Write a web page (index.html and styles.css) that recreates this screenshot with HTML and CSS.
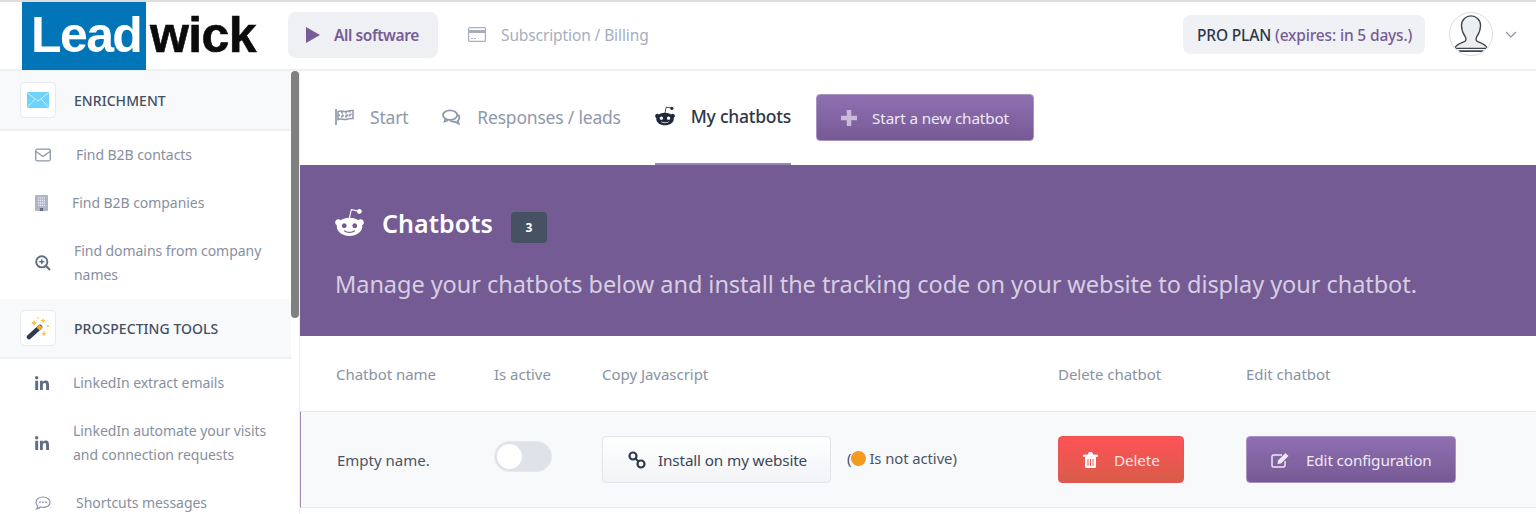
FILE: index.html
```html
<!DOCTYPE html>
<html lang="en">
<head>
<meta charset="utf-8">
<title>Chatbots</title>
<link rel="stylesheet" href="styles.css">
</head>
<body>
<svg class="defs" width="0" height="0" aria-hidden="true">
  <symbol id="alien" viewBox="16 16 480 480"><path d="M440.3 203.5c-15 0-28.2 6.2-37.9 15.9-35.7-24.7-83.8-40.6-137.1-42.3L293 52.3l88.2 19.8c0 21.6 17.6 39.2 39.2 39.2 22 0 39.7-18.1 39.7-39.7s-17.6-39.7-39.7-39.7c-15.4 0-28.7 9.3-35.3 22l-97.4-21.6c-4.9-1.3-9.7 2.2-11 7.1L246.3 177c-52.9 2.2-100.5 18.1-136.3 42.8-9.7-10.1-23.4-16.3-38.4-16.3-55.6 0-73.8 74.6-22.9 100.1-1.8 7.9-2.6 16.3-2.6 24.7 0 83.8 94.4 151.7 210.3 151.7 116.4 0 210.8-67.9 210.8-151.7 0-8.4-.9-17.2-3.1-25.1 49.9-25.6 31.5-99.7-23.8-99.7zM129.4 308.9c0-22 17.6-39.7 39.7-39.7 21.6 0 39.2 17.6 39.2 39.7 0 21.6-17.6 39.2-39.2 39.2-22 .1-39.7-17.6-39.7-39.2zm214.3 93.5c-36.4 36.4-139.1 36.4-175.5 0-4-3.5-4-9.7 0-13.7 3.5-3.5 9.7-3.5 13.2 0 27.8 28.5 120 29 149 0 3.5-3.5 9.7-3.5 13.2 0 4.1 4 4.1 10.2.1 13.7zm-.8-54.2c-21.6 0-39.2-17.6-39.2-39.2 0-22 17.6-39.7 39.2-39.7 22 0 39.7 17.6 39.7 39.7-.1 21.5-17.7 39.2-39.7 39.2z"/></symbol>
  <symbol id="linkedin" viewBox="0 0 448 448"><path d="M100.3 448H7.4V148.9h92.9zM53.8 108.1C24.1 108.1 0 83.5 0 53.8a53.8 53.8 0 0 1 107.6 0c0 29.7-24.1 54.3-53.8 54.3zM447.9 448h-92.7V302.4c0-34.7-.7-79.2-48.3-79.2-48.3 0-55.7 37.7-55.7 76.7V448h-92.8V148.9h89.1v40.8h1.3c12.4-23.5 42.7-48.3 87.9-48.3 94 0 111.3 61.9 111.3 142.3V448z"/></symbol>
</svg>

<header class="topbar">
  <div class="logo"><span class="logo-lead">Lead</span><span class="logo-wick">wick</span></div>
  <nav class="topnav">
    <a class="topnav-item is-current">
      <svg class="icon-play" viewBox="0 0 14 16"><path d="M0 0l14 8-14 8z"/></svg>
      <span>All software</span>
    </a>
    <a class="topnav-item">
      <svg class="icon-card" viewBox="0 0 18 15"><rect x=".6" y=".6" width="16.8" height="13.8" rx="1" fill="none" stroke="currentColor" stroke-width="1.2"/><rect x="1" y="3" width="16" height="3" fill="currentColor"/><path d="M3 11.5h2M6 11.5h2" stroke="currentColor"/></svg>
      <span>Subscription / Billing</span>
    </a>
  </nav>
  <div class="topbar-right">
    <div class="plan"><span class="plan-name">PRO PLAN</span> <span class="plan-exp">(expires: in 5 days.)</span></div>
    <div class="avatar">
      <svg viewBox="0 0 44 44"><path d="M5 37c1-4 5-5 10-7 2-1 2-3 1-5-2-3-4-8-4-12 0-6 5-10 10-10s10 4 10 10c0 4-2 9-4 12-1 2-1 4 1 5 5 2 9 3 10 7z" fill="#eceef0" stroke="#3d4650" stroke-width="1.4"/><path d="M9 40h26" stroke="#3d4650" stroke-width="1.800"/></svg>
    </div>
    <svg class="chevron" viewBox="0 0 12 7"><path d="M1 1l5 5 5-5" fill="none" stroke="currentColor" stroke-width="1.2"/></svg>
  </div>
</header>

<div class="layout">
  <aside class="sidebar">
    <div class="side-head">
      <span class="side-badge">
        <svg viewBox="0 0 22 16" width="22" height="16"><rect width="22" height="16" rx="1" fill="#6fd2fb"/><path d="M.5 1l10.500 8 10.500-8M.5 15l7.500-8M21.500 15l-7.500-8" fill="none" stroke="#c9eefd" stroke-width="1"/></svg>
      </span>
      <span class="side-title">ENRICHMENT</span>
    </div>
    <a class="side-item">
      <svg class="side-icon w41" viewBox="0 0 16 13"><rect x=".7" y=".7" width="14.600" height="11.600" rx="1.500" fill="none" stroke="currentColor" stroke-width="1.300"/><path d="M1 3l7 5 7-5" fill="none" stroke="currentColor" stroke-width="1.300"/></svg>
      <span>Find B2B contacts</span>
    </a>
    <a class="side-item">
      <svg class="side-icon w37" viewBox="0 0 13 16"><rect width="13" height="16" rx="1" fill="#aeb5c4"/><path d="M3 3h7M3 5.500h7M3 8h7M3 10.500h7" stroke="#e6e8ee" stroke-width="1.300" stroke-dasharray="1.200 .7"/><rect x="5" y="13" width="3" height="3" fill="#5f6c82"/></svg>
      <span>Find B2B companies</span>
    </a>
    <a class="side-item">
      <svg class="side-icon w39 zoom" viewBox="0 0 16 16"><circle cx="6.800" cy="6.800" r="5.600" fill="none" stroke="currentColor" stroke-width="1.900"/><path d="M11 11l4 4" stroke="currentColor" stroke-width="2.200"/><path d="M4.300 6.800h5M6.800 4.300v5" stroke="currentColor" stroke-width="1.400"/></svg>
      <span>Find domains from company names</span>
    </a>
    <div class="side-head">
      <span class="side-badge">
        <svg viewBox="0 0 24 24" width="24" height="24"><path d="M3 21l11-10" stroke="#2f3b4f" stroke-width="4.500" stroke-linecap="round"/><path d="M12 13l3-3" stroke="#f5a623" stroke-width="4.500"/><path d="M8 4l1 2 2 1-2 1-1 2-1-2-2-1 2-1zM17 2l.8 2 2 .8-2 .8-.8 2-.8-2-2-.8 2-.8zM18 15l.8 2 2 .8-2 .8-.8 2-.8-2-2-.8 2-.8z" fill="#fbc02d"/><circle cx="22" cy="10" r="1" fill="#fbc02d"/><circle cx="12" cy="2" r=".8" fill="#fbc02d"/></svg>
      </span>
      <span class="side-title">PROSPECTING TOOLS</span>
    </div>
    <a class="side-item">
      <svg class="side-icon w38 dark"><use href="#linkedin"/></svg>
      <span>LinkedIn extract emails</span>
    </a>
    <a class="side-item">
      <svg class="side-icon w38 dark"><use href="#linkedin"/></svg>
      <span>LinkedIn automate your visits and connection requests</span>
    </a>
    <a class="side-item">
      <svg class="side-icon w41" viewBox="0 0 16 14"><path d="M8 1c4 0 7 2.200 7 5.200s-3 5.200-7 5.200c-1 0-1.800-.1-2.600-.4C4.400 12 3 12.800 1.500 13c.8-.8 1.300-1.800 1.400-2.900C1.700 9.100 1 7.700 1 6.200 1 3.200 4 1 8 1z" fill="none" stroke="currentColor" stroke-width="1.200"/><circle cx="5" cy="6.200" r=".9" fill="currentColor"/><circle cx="8" cy="6.200" r=".9" fill="currentColor"/><circle cx="11" cy="6.200" r=".9" fill="currentColor"/></svg>
      <span>Shortcuts messages</span>
    </a>
    <div class="scroll-thumb"></div>
  </aside>

  <main class="content">
    <div class="tabs">
      <a class="tab">
        <svg class="tab-icon" viewBox="0 0 19 16"><path d="M1 0v16" stroke="currentColor" stroke-width="1.700"/><path d="M3 2.500c3-1.500 5 .5 8 0s4-1.500 7-1v8c-3-.5-4 .5-7 1s-5-1.500-8 0z" fill="none" stroke="currentColor" stroke-width="1.500"/><path d="M7 2.500v8M11 2.500v8M14.500 1.500v8M3 6.500c3-1.200 5 .5 8 0s4-1.400 7-1" stroke="currentColor" stroke-width="1.800" fill="none" stroke-dasharray="2 2"/></svg>
        <span>Start</span>
      </a>
      <a class="tab">
        <svg class="tab-icon" viewBox="0 0 20 16"><ellipse cx="8.500" cy="6" rx="7.500" ry="5" fill="none" stroke="currentColor" stroke-width="1.900"/><path d="M3.500 10l-1 3 4-1.500" fill="none" stroke="currentColor" stroke-width="1.600"/><path d="M17 5.500c2 2.500 1.500 5-.5 6.500l1 3-4-2c-2 .2-3.500-.2-5-1" fill="none" stroke="currentColor" stroke-width="1.900"/></svg>
        <span>Responses / leads</span>
      </a>
      <a class="tab is-active">
        <svg class="tab-icon alien"><use href="#alien"/></svg>
        <span>My chatbots</span>
      </a>
      <a class="btn btn-purple btn-new">
        <svg class="btn-plus" viewBox="0 0 16 16"><path d="M8 0v16M0 8h16" stroke="currentColor" stroke-width="4.500"/></svg>
        <span>Start a new chatbot</span>
      </a>
    </div>

    <section class="banner">
      <div class="banner-title">
        <svg class="banner-icon"><use href="#alien"/></svg>
        <h1>Chatbots</h1>
        <span class="count">3</span>
      </div>
      <p class="banner-text">Manage your chatbots below and install the tracking code on your website to display your chatbot.</p>
    </section>

    <div class="grid-row table-head">
      <span>Chatbot name</span>
      <span>Is active</span>
      <span>Copy Javascript</span>
      <span>Delete chatbot</span>
      <span>Edit chatbot</span>
    </div>
    <div class="grid-row table-row">
      <span class="cell-name">Empty name.</span>
      <span class="toggle"><span class="knob"></span></span>
      <div class="cell-install">
        <a class="btn btn-light">
          <svg class="btn-ico" viewBox="0 0 18 18"><g fill="none" stroke="#2f3b4f" stroke-width="2.200"><circle cx="5" cy="5" r="3.500"/><circle cx="13" cy="13" r="3.500"/><path d="M7 7l4 4"/></g></svg>
          <span>Install on my website</span>
        </a>
        <span class="status">(<i class="dot"></i>Is not active)</span>
      </div>
      <div>
        <a class="btn btn-red">
          <svg class="btn-ico trash" viewBox="0 0 14 16"><path d="M0 3h14v1.500H0zM4.500 3l1-2.500h3L9.500 3" fill="#fff" stroke="#fff" stroke-width=".8"/><path d="M1.500 5h11v9.500A1.500 1.500 0 0 1 11 16H3a1.500 1.500 0 0 1-1.500-1.500z" fill="#fff"/><path d="M4.500 7v7M7 7v7M9.500 7v7" stroke="#e65a55" stroke-width="1"/></svg>
          <span>Delete</span>
        </a>
      </div>
      <div>
        <a class="btn btn-purple btn-edit">
          <svg class="btn-ico edit" viewBox="0 0 20 16"><path d="M14 9v4.500a1.500 1.500 0 0 1-1.500 1.500h-10A1.500 1.500 0 0 1 1 13.500v-9A1.500 1.500 0 0 1 2.500 3H11" fill="none" stroke="currentColor" stroke-width="1.500"/><path d="M7 8.500L14.500 1l3 3L10 11.500l-3.500.5z" fill="currentColor"/></svg>
          <span>Edit configuration</span>
        </a>
      </div>
    </div>
  </main>
</div>
</body>
</html>
```

FILE: styles.css
```css
* { box-sizing: border-box; }
html, body { height: 100%; }
body {
  margin: 0;
  height: 514px;
  overflow: hidden;
  background: #fff;
  font-family: "Noto Sans", "Open Sans", sans-serif;
  font-size: 14px;
  color: #2d3748;
}
.defs { position: absolute; }
a { color: inherit; text-decoration: none; }

/* top bar */
.topbar {
  height: 71px;
  display: flex;
  align-items: center;
  border-top: 2px solid #dedede;
  border-bottom: 2px solid #eef0f4;
  padding: 0 0 2px 22px;
}
.logo {
  display: flex;
  align-self: flex-start;
  height: 68px;
  font-family: "Liberation Sans", Arial, sans-serif;
  font-weight: 700;
  font-size: 50px;
  line-height: 66px;
}
.logo-lead {
  width: 124px;
  padding-left: 9px;
  background: #0275b8;
  color: #fff;
  letter-spacing: -1.600px;
}
.logo-wick {
  width: 112px;
  padding-left: 4px;
  color: #0b0b0b;
  letter-spacing: -.6px;
  -webkit-text-stroke: .6px #0b0b0b;
}
.topnav { display: flex; align-items: center; margin-left: 30px; gap: 30px; }
.topnav-item {
  display: flex;
  align-items: center;
  height: 46px;
  color: #a6aebd;
  font-size: 15.500px;
  letter-spacing: -.11px;
}
.topnav-item.is-current {
  width: 150px;
  padding-left: 18px;
  border-radius: 8px;
  background: #eff0f4;
  color: #775c96;
  font-weight: 600;
  letter-spacing: -.42px;
}
.icon-play { width: 14px; height: 16px; margin-right: 14px; fill: currentColor; }
.icon-card { width: 18px; height: 15px; margin-right: 15px; }
.topbar-right { display: flex; align-items: center; margin-left: auto; padding-right: 19px; }
.plan {
  width: 242px;
  height: 39px;
  padding-left: 14px;
  line-height: 40px;
  border-radius: 8px;
  background: #eff1f5;
  font-size: 15.500px;
  font-weight: 500;
  letter-spacing: -.16px;
  white-space: nowrap;
}
.plan-exp { color: #775c96; }
.avatar {
  width: 44px;
  height: 44px;
  margin: -2px 0 0 24px;
  border: 1px solid #dcdcdc;
  border-radius: 50%;
  overflow: hidden;
}
.avatar svg { display: block; width: 100%; height: 100%; }
.chevron { width: 12px; height: 7px; margin-left: 12px; color: #8b93a5; }

/* layout */
.layout { display: flex; height: 443px; }
.sidebar {
  position: relative;
  flex: 0 0 300px;
  height: 443px;
  overflow: hidden;
  padding-right: 8px;
  border-right: 1px solid #eceef2;
}
.side-head {
  display: flex;
  align-items: center;
  height: 60px;
  padding-left: 20px;
  background: #f8f9fb;
  border-bottom: 2px solid #eef0f4;
}
.side-badge {
  display: flex;
  flex: 0 0 36px;
  align-items: center;
  justify-content: center;
  height: 36px;
  margin-right: 18px;
  background: #fff;
  border: 1px solid #e8eaef;
  border-radius: 5px;
}
.side-title { font-size: 14px; font-weight: 500; letter-spacing: .05px; color: #434f63; }
.side-item {
  display: flex;
  align-items: center;
  padding: 12px 20px 12px 35px;
  font-size: 14px;
  line-height: 24px;
  color: #87909f;
  letter-spacing: -.05px;
}
.side-icon { flex: none; width: 16px; height: 16px; color: #8d96a8; }
.side-icon.dark { color: #616d80; fill: currentColor; width: 14px; height: 14px; }
.side-icon.zoom { color: #5f6b7e; }
.side-icon.w41 { margin-right: 25px; }
.side-icon.w37 { margin-right: 24px; width: 13px; }
.side-icon.w39 { margin-right: 23px; }
.side-icon.w38 { margin-right: 24px; }
.scroll-thumb {
  position: absolute;
  top: 0;
  right: 0;
  width: 8px;
  height: 247px;
  border-radius: 4px;
  background: #808080;
}

/* main */
.content { flex: 1; min-width: 0; }
.tabs {
  display: flex;
  align-items: center;
  height: 94px;
  padding-left: 35px;
  gap: 34px;
}
.tab {
  display: flex;
  align-items: center;
  align-self: stretch;
  padding-bottom: 2px;
  color: #8f99aa;
  font-size: 17.500px;
  letter-spacing: -.2px;
}
.tab-icon { width: 19px; height: 16px; margin-right: 16px; }
.tab.is-active {
  color: #2d3748;
  font-weight: 500;
  border-bottom: 2px solid #9b86b3;
  font-size: 17.500px;
  letter-spacing: -.24px;
}
.tab-icon.alien { width: 20px; height: 20px; fill: #20293a; }
.btn {
  display: flex;
  align-items: center;
  height: 47px;
  border-radius: 4px;
  font-size: 15.300px;
  letter-spacing: -.15px;
  white-space: nowrap;
}
.btn-purple {
  background: linear-gradient(#8f6fb1, #765a94);
  border: 1px solid #a891c3;
  color: #efe9f5;
}
.btn-new { width: 218px; padding-left: 24px; margin: -1px 0 0 -9px; }
.btn-plus { width: 16px; height: 16px; margin-right: 15px; color: #c9b9da; }
.banner {
  height: 171px;
  padding: 41px 36px 0 35px;
  background: #755b94;
  color: #fff;
}
.banner-title { display: flex; align-items: center; height: 33px; }
.banner-icon { width: 29px; height: 29px; margin-right: 18px; fill: #fff; }
.banner-title h1 { margin: 0 18px 0 0; font-size: 25px; font-weight: 600; letter-spacing: .1px; }
.count {
  width: 36px;
  height: 31px;
  margin-top: 9px;
  border-radius: 4px;
  background: #465264;
  font-size: 12px;
  font-weight: 700;
  line-height: 32px;
  text-align: center;
}
.banner-text {
  margin: 29px 0 0;
  font-size: 23.500px;
  line-height: 32px;
  letter-spacing: -.05px;
  color: #d6cee1;
  white-space: nowrap;
}
.grid-row {
  display: grid;
  grid-template-columns: 158px 108px 456px 188px 1fr;
  align-items: center;
  padding-left: 36px;
}
.table-head { height: 75px; font-size: 15px; color: #8a92a3; padding-top: 1px; letter-spacing: -.03px; }
.table-row {
  height: 97px;
  background: #f8f9fb;
  border-top: 1px solid #e8eaf0;
  border-bottom: 1px solid #e8eaf0;
  border-left: 1px solid #9f8bb6;
  padding-left: 35px;
  font-size: 15px;
}
.cell-name { margin-left: 1px; color: #4a5466; }
.toggle {
  display: block;
  width: 58px;
  height: 31px;
  margin-top: -6px;
  padding: 2px;
  border-radius: 16px;
  background: #dfe2e9;
  border: 1px solid #e6e8ee;
}
.knob { display: block; width: 25px; height: 25px; border-radius: 50%; background: #fff; }
.cell-install { display: flex; align-items: center; }
.btn-ico { flex: none; width: 18px; height: 18px; margin-right: 12px; }
.btn-light {
  width: 229px;
  padding-left: 25px;
  color: #3c4657;
  background: linear-gradient(#fff, #f2f3f6);
  border: 1px solid #e3e5ea;
}
.status { margin: -4px 0 0 16px; color: #4a5466; font-size: 14.800px; letter-spacing: -.05px; }
.dot {
  display: inline-block;
  width: 15px;
  height: 15px;
  margin: 0 3px 0 0;
  vertical-align: -2px;
  border-radius: 50%;
  background: #f39a1f;
}
.btn-red {
  width: 126px;
  padding-left: 24px;
  color: #fde4e2;
  background: linear-gradient(#ff5258, #d85c48);
  border: 1px solid #e8574f;
}
.trash { width: 15px; height: 16px; margin-right: 16px; }
.btn-edit { width: 210px; padding-left: 24px; }
.edit { width: 20px; height: 16px; margin-right: 15px; }
```
